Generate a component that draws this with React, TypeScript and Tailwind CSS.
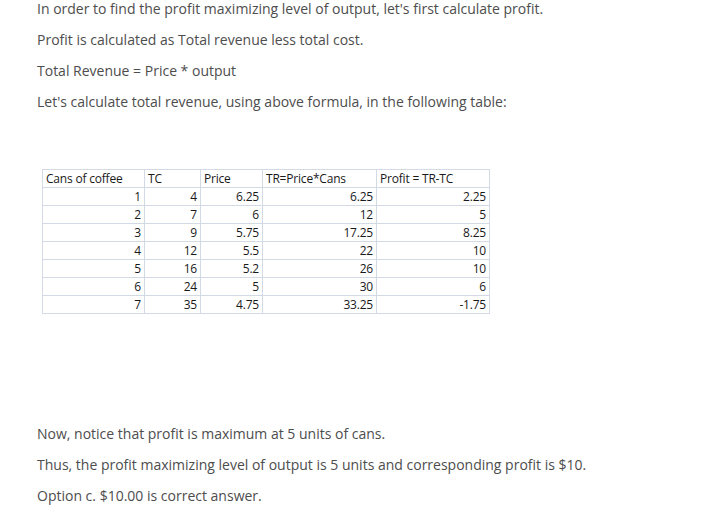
const rows = [
  [1, 4, "6.25", "6.25", "2.25"],
  [2, 7, "6", "12", "5"],
  [3, 9, "5.75", "17.25", "8.25"],
  [4, 12, "5.5", "22", "10"],
  [5, 16, "5.2", "26", "10"],
  [6, 24, "5", "30", "6"],
  [7, 35, "4.75", "33.25", "-1.75"],
];

const headers = ["Cans of coffee", "TC", "Price", "TR=Price*Cans", "Profit = TR-TC"];
const widths = ["w-[102px]", "w-[56px]", "w-[62px]", "w-[114px]", "w-[113px]"];

export default function App() {
  return (
    <div className="w-[706px] h-[512px] bg-white pl-[37px] text-[14px] text-[#4d4d4d] font-['Open_Sans',sans-serif]">
      <p className="leading-[20px] -mt-px mb-[11px]">
        In order to find the profit maximizing level of output, let's first calculate profit.
      </p>
      <p className="leading-[20px] mb-[11px]">Profit is calculated as Total revenue less total cost.</p>
      <p className="leading-[20px] mb-[11px]">Total Revenue = Price * output</p>
      <p className="leading-[20px]">Let's calculate total revenue, using above formula, in the following table:</p>

      <table className="ml-[5px] mt-[57px] border-collapse text-[12px] text-[#1a1a1a] font-['Open_Sans',sans-serif] tracking-[-0.2px]">
        <thead>
          <tr className="h-[18px]">
            {headers.map((h, i) => (
              <th
                key={h}
                className={`${widths[i]} border border-[#d3dae6] px-[3px] py-0 text-left font-normal leading-[16px]`}
              >
                {h}
              </th>
            ))}
          </tr>
        </thead>
        <tbody>
          {rows.map((r) => (
            <tr key={r[0]} className="h-[18px]">
              {r.map((c, i) => (
                <td key={i} className="border border-[#d3dae6] px-[3px] py-0 text-right leading-[16px]">
                  {c}
                </td>
              ))}
            </tr>
          ))}
        </tbody>
      </table>

      <p className="leading-[20px] mt-[110px] mb-[11px]">Now, notice that profit is maximum at 5 units of cans.</p>
      <p className="leading-[20px] mb-[11px]">
        Thus, the profit maximizing level of output is 5 units and corresponding profit is $10.
      </p>
      <p className="leading-[20px]">Option c. $10.00 is correct answer.</p>
    </div>
  );
}
